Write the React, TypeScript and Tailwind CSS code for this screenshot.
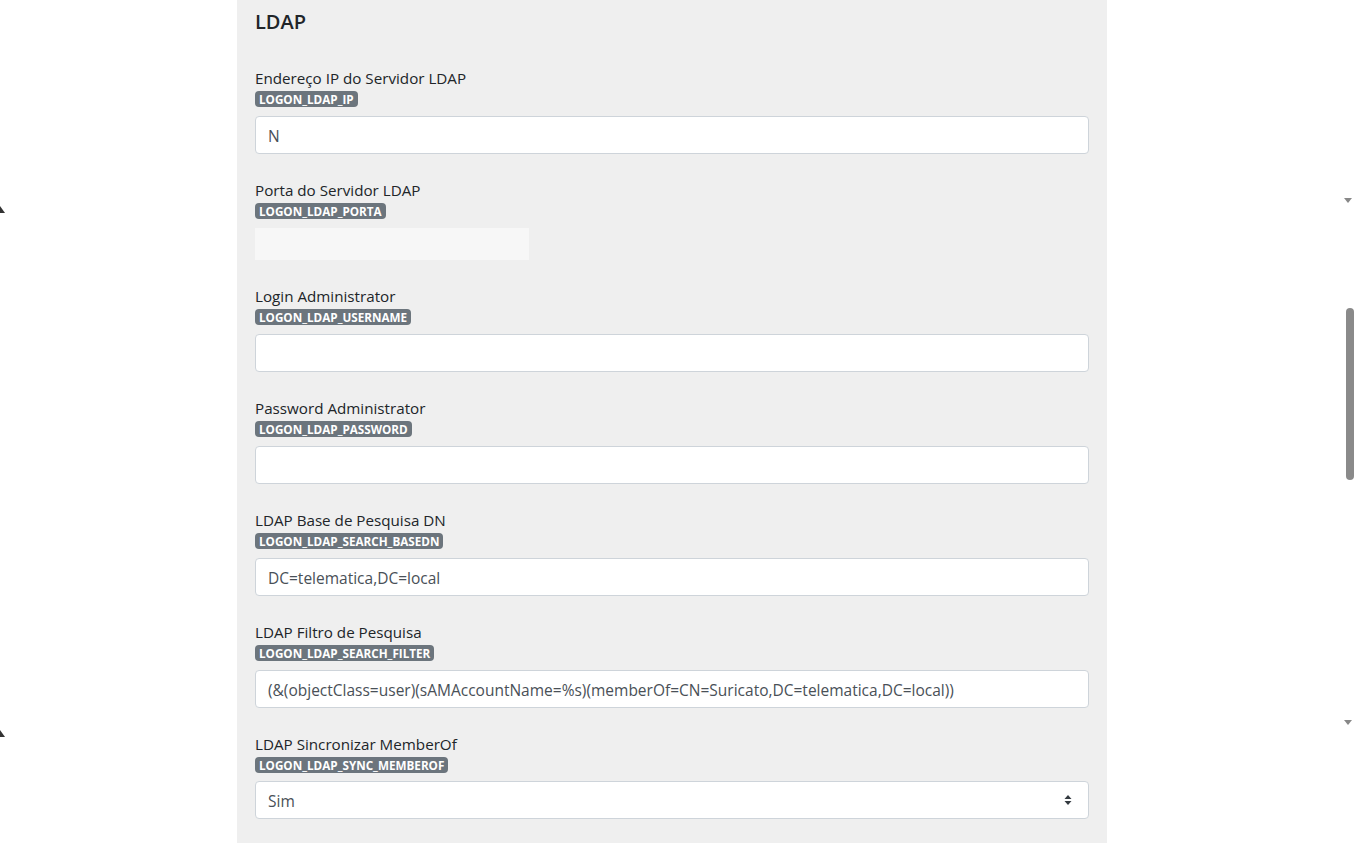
const font = { fontFamily: '"Open Sans", "Noto Sans", sans-serif' };

function Badge({ text }: { text: string }) {
  return (
    <div className="flex mt-[2px]">
      <span className="bg-[#6c757d] text-white text-[11.7px] font-bold leading-[16px] h-4 px-1 rounded-[4px]">
        {text}
      </span>
    </div>
  );
}

function Field({ label, code, children }: { label: string; code: string; children: React.ReactNode }) {
  return (
    <div className="mb-[25px]">
      <div className="text-[15.2px] leading-[22px] text-[#212529]">{label}</div>
      <Badge text={code} />
      <div className="mt-[9px]">{children}</div>
    </div>
  );
}

function TextInput({ value }: { value?: string }) {
  return (
    <div className="h-[38px] bg-white border border-[#ced4da] rounded-[4px] px-3 pt-[3px] flex items-center text-[15.5px] text-[#495057]">
      {value}
    </div>
  );
}

export default function App() {
  return (
    <div className="h-[847px] w-full overflow-hidden bg-white flex relative" style={font}>
      <div className="flex-1 flex justify-center">
        <div className="w-[870px] h-[843px] bg-[#efefef] px-[18px] pt-[10px]">
          <div className="text-[20px] leading-[24px] font-semibold text-[#212529] mb-[33px]">LDAP</div>

          <Field label="Endereço IP do Servidor LDAP" code="LOGON_LDAP_IP">
            <TextInput value="N" />
          </Field>

          <Field label="Porta do Servidor LDAP" code="LOGON_LDAP_PORTA">
            <div className="h-8 w-[274px] bg-[#f7f7f7]" />
          </Field>

          <Field label="Login Administrator" code="LOGON_LDAP_USERNAME">
            <TextInput />
          </Field>

          <Field label="Password Administrator" code="LOGON_LDAP_PASSWORD">
            <TextInput />
          </Field>

          <Field label="LDAP Base de Pesquisa DN" code="LOGON_LDAP_SEARCH_BASEDN">
            <TextInput value="DC=telematica,DC=local" />
          </Field>

          <Field label="LDAP Filtro de Pesquisa" code="LOGON_LDAP_SEARCH_FILTER">
            <TextInput value="(&(objectClass=user)(sAMAccountName=%s)(memberOf=CN=Suricato,DC=telematica,DC=local))" />
          </Field>

          <div className="text-[15.2px] leading-[22px] text-[#212529]">LDAP Sincronizar MemberOf</div>
          <Badge text="LOGON_LDAP_SYNC_MEMBEROF" />
          <div className="mt-2 h-[38px] bg-white border border-[#ced4da] rounded-[4px] pl-3 pr-4 pt-[3px] flex items-center justify-between text-[15.5px] text-[#495057]">
            <span>Sim</span>
            <svg width="8" height="12" viewBox="0 0 8 12" className="-mt-[3px]">
              <path d="M4 1 L7.5 5 H0.5 Z M4 11 L0.5 7 H7.5 Z" fill="#343a40" />
            </svg>
          </div>
        </div>
      </div>

      {/* scrollbar */}
      <div className="w-[11px] h-full relative">
        <div className="absolute left-[2px] top-[308px] w-2 h-[172px] rounded-full bg-[#8a8a8a]" />
      </div>

      {/* edge marks */}
      <div className="absolute left-0 top-[206px] w-0 h-0 border-l-[5px] border-l-[#333] border-t-[7px] border-t-transparent" />
      <div className="absolute left-0 top-[730px] w-0 h-0 border-l-[5px] border-l-[#333] border-t-[7px] border-t-transparent" />
      <div className="absolute right-[3px] top-[198px] w-0 h-0 border-t-[5px] border-t-[#888] border-x-[4px] border-x-transparent" />
      <div className="absolute right-[3px] top-[720px] w-0 h-0 border-t-[5px] border-t-[#888] border-x-[4px] border-x-transparent" />
    </div>
  );
}
